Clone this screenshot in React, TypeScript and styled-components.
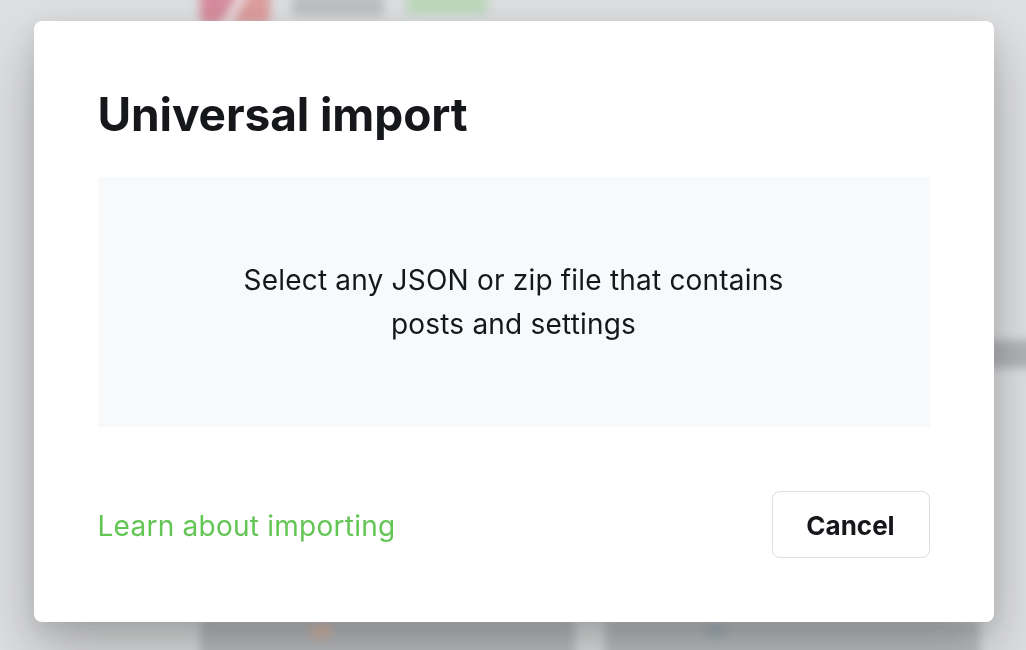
import React from "react";
import styled, { createGlobalStyle } from "styled-components";

const GlobalStyle = createGlobalStyle`
  html, body {
    margin: 0;
    padding: 0;
    width: 100%;
    height: 100%;
    overflow: hidden;
    background: #dfe0e2;
    font-family: Inter, "Noto Sans", "Liberation Sans", sans-serif;
    -webkit-font-smoothing: antialiased;
  }
`;

const Screen = styled.div`
  position: relative;
  width: 1026px;
  height: 650px;
  overflow: hidden;
  background: #dfe0e2;
`;

// blurred admin page sitting behind the modal
const BackPage = styled.div`
  position: absolute;
  inset: 0;
  filter: blur(5px);
  display: flex;
  flex-direction: column;
  justify-content: space-between;
  padding: 0 0 0 200px;
`;

const BackHeader = styled.div`
  display: flex;
  align-items: flex-start;
  gap: 22px;
  margin-top: -12px;
`;

const BackLogo = styled.div`
  width: 70px;
  height: 36px;
  border-radius: 6px;
  background: linear-gradient(120deg, #d23c5a 0 45%, #f2d6da 45% 58%, #df5d5a 58%);
`;

const BackTitle = styled.div`
  width: 92px;
  height: 22px;
  margin-top: 6px;
  border-radius: 4px;
  background: #9fa1a6;
`;

const BackBadge = styled.div`
  width: 82px;
  height: 22px;
  margin-top: 4px;
  border-radius: 5px;
  background: #9fd499;
`;

const BackCards = styled.div`
  display: flex;
  gap: 30px;
  margin-bottom: -30px;
`;

const BackCard = styled.div<{ $dot: string; $dotLeft: number }>`
  width: 375px;
  height: 60px;
  background: #9c9ea1;
  border-radius: 6px;
  position: relative;
  &::after {
    content: "";
    position: absolute;
    left: ${({ $dotLeft }) => $dotLeft}px;
    top: 4px;
    width: 22px;
    height: 14px;
    border-radius: 50%;
    background: ${({ $dot }) => $dot};
  }
`;

const SideBar = styled.div`
  position: absolute;
  right: -20px;
  top: 340px;
  width: 60px;
  height: 28px;
  background: #88898c;
  border-radius: 4px;
`;

const Overlay = styled.div`
  position: absolute;
  inset: 0;
  background: rgba(220, 221, 224, 0.5);
`;

const Stage = styled.div`
  position: relative;
  height: 100%;
  display: flex;
  justify-content: center;
  align-items: flex-start;
  padding-top: 21px;
  padding-left: 1px;
  box-sizing: border-box;
`;

const Modal = styled.div`
  width: 960px;
  box-sizing: border-box;
  padding: 64px;
  background: #ffffff;
  border-radius: 8px;
  box-shadow: 0 30px 60px rgba(0, 0, 0, 0.22), 0 8px 24px rgba(0, 0, 0, 0.1);
  display: flex;
  flex-direction: column;
`;

const Title = styled.h1`
  margin: 0 0 35px;
  padding-top: 1px;
  font-size: 46px;
  font-weight: 700;
  line-height: 56px;
  letter-spacing: -0.1px;
  color: #15171a;
`;

const DropZone = styled.div`
  height: 250px;
  background: #f8f9fa;
  display: flex;
  align-items: center;
  justify-content: center;
  text-align: center;
`;

const DropText = styled.p`
  margin: 0;
  max-width: 600px;
  font-size: 28px;
  line-height: 44px;
  letter-spacing: 0.2px;
  color: #15171a;
`;

const Footer = styled.div`
  margin-top: 64px;
  display: flex;
  align-items: center;
  justify-content: space-between;
`;

const HelpLink = styled.a`
  font-size: 28px;
  letter-spacing: 0.25px;
  color: #62c554;
  text-decoration: none;
  cursor: pointer;
  padding-top: 2px;
`;

const CancelButton = styled.button`
  width: 158px;
  height: 67px;
  box-sizing: border-box;
  background: #ffffff;
  border: 1.5px solid #dcdde1;
  border-radius: 8px;
  font-family: inherit;
  font-size: 26px;
  font-weight: 700;
  color: #15171a;
  cursor: pointer;
  padding: 2px 0 0;
`;

export default function App() {
  return (
    <Screen>
      <GlobalStyle />
      <BackPage>
        <BackHeader>
          <BackLogo />
          <BackTitle />
          <BackBadge />
        </BackHeader>
        <BackCards>
          <BackCard $dot="#d99a76" $dotLeft={110} />
          <BackCard $dot="#6f8a99" $dotLeft={100} />
        </BackCards>
        <SideBar />
      </BackPage>
      <Overlay />
      <Stage>
        <Modal>
          <Title>Universal import</Title>
          <DropZone>
            <DropText>Select any JSON or zip file that contains posts and settings</DropText>
          </DropZone>
          <Footer>
            <HelpLink>Learn about importing</HelpLink>
            <CancelButton>Cancel</CancelButton>
          </Footer>
        </Modal>
      </Stage>
    </Screen>
  );
}
